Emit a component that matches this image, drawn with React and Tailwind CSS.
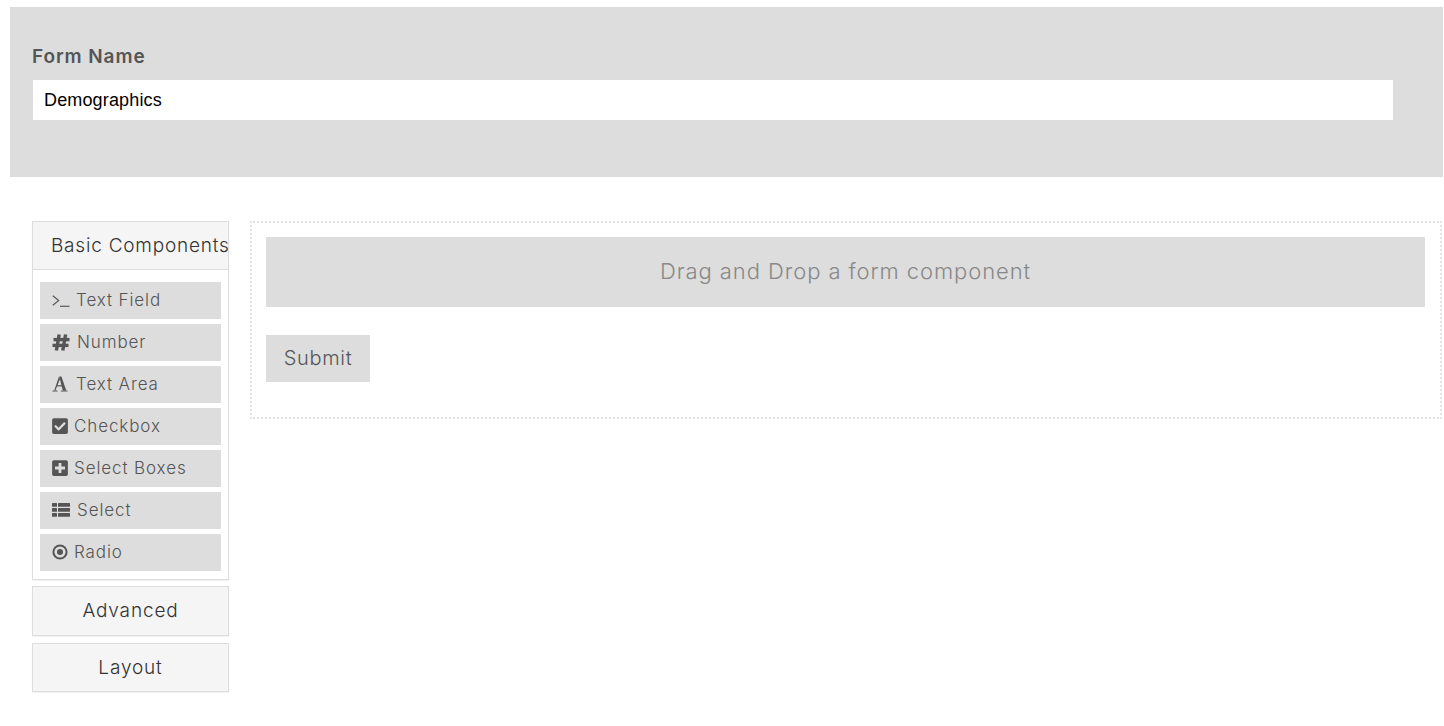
import React from 'react'
import { FaCheckSquare, FaPlusSquare } from 'react-icons/fa'

function TerminalIcon() {
  return (
    <svg width="18" height="12" viewBox="0 0 18 12" fill="none" stroke="#555" strokeWidth="1.15">
      <path d="M0.8 0.8 L6.7 5.5 L0.8 10.2" />
      <path d="M8 11.3 H17.5" />
    </svg>
  )
}

function HashIcon() {
  return (
    <svg width="18" height="17" viewBox="0 0 18 17" fill="none" stroke="#555" strokeWidth="3.4">
      <path d="M7.2 0.5 L4.4 16.5" />
      <path d="M13.6 0.5 L10.8 16.5" />
      <path d="M1.5 5.6 H17.5" />
      <path d="M0.5 11.4 H16.5" />
    </svg>
  )
}

function FontIcon() {
  return (
    <svg width="16" height="16" viewBox="0 0 16 16" fill="#555">
      <polygon points="7.2,0.5 9.4,0.5 14.3,14.6 10.8,14.6" />
      <polygon points="7,0.5 8,3 3.4,14.6 2.2,14.6" />
      <rect x="4.5" y="9.2" width="6.1" height="1.2" />
      <rect x="0.5" y="14.5" width="5" height="1" />
      <rect x="9" y="14.5" width="6.5" height="1" />
    </svg>
  )
}

function ListIcon() {
  return (
    <svg width="18" height="14" viewBox="0 0 18 14" fill="#555">
      <rect x="0" y="0" width="5" height="3.8" rx="0.6" />
      <rect x="6" y="0" width="12" height="3.8" rx="0.6" />
      <rect x="0" y="5" width="5" height="3.8" rx="0.6" />
      <rect x="6" y="5" width="12" height="3.8" rx="0.6" />
      <rect x="0" y="10" width="5" height="3.8" rx="0.6" />
      <rect x="6" y="10" width="12" height="3.8" rx="0.6" />
    </svg>
  )
}

function RadioIcon() {
  return (
    <svg width="16" height="16" viewBox="0 0 16 16">
      <circle cx="8" cy="8" r="6.6" fill="none" stroke="#555" strokeWidth="2" />
      <circle cx="8" cy="8" r="3" fill="#555" />
    </svg>
  )
}

const items = [
  { label: 'Text Field', icon: <TerminalIcon />, box: 'w-[18px]', gap: 'gap-[6px]' },
  { label: 'Number', icon: <HashIcon />, box: 'w-[18px]', gap: 'gap-[7px]' },
  { label: 'Text Area', icon: <FontIcon />, box: 'w-[16px] mb-[2px]', gap: 'gap-[8px]' },
  { label: 'Checkbox', icon: <FaCheckSquare size={18} />, box: 'w-[16px] mb-[2px]', gap: 'gap-[6px]' },
  { label: 'Select Boxes', icon: <FaPlusSquare size={18} />, box: 'w-[16px] mb-[2px]', gap: 'gap-[6px]' },
  { label: 'Select', icon: <ListIcon />, box: 'w-[18px] mb-[2px]', gap: 'gap-[7px]' },
  { label: 'Radio', icon: <RadioIcon />, box: 'w-[16px] mb-[1px]', gap: 'gap-[6px]' },
]

function SideItem({ label, icon, box, gap }) {
  return (
    <div className={`h-[37px] pl-3 flex items-center ${gap} bg-[#ddd] text-[#555] text-[17px] font-light tracking-[0.9px]`}>
      <span className={`flex items-center justify-center ${box}`}>{icon}</span>
      <span>{label}</span>
    </div>
  )
}

function CollapsedPanel({ title, className }) {
  return (
    <div className={`w-[197px] flex items-center justify-center bg-[#f5f5f5] border border-[#ddd] shadow-[0_1px_1px_rgba(0,0,0,0.05)] text-[#333] text-[19px] font-light tracking-[0.85px] ${className}`}>
      {title}
    </div>
  )
}

export default function App() {
  return (
    <div className="w-[1444px] h-[726px] overflow-hidden bg-white pt-[7px] font-['Inter',sans-serif]">
      <div className="ml-[10px] w-[1433px] h-[170px] bg-[#ddd] pl-[22px] pt-[37px]">
        <label className="block h-[35px] text-[19px] leading-[26px] font-semibold tracking-[0.9px] text-[#555]">Form Name</label>
        <div className="w-[1362px] h-[42px] bg-white border border-[#ddd] pl-[11px] flex items-center font-['Liberation_Sans',sans-serif] text-[18px] tracking-[0.15px] text-black">
          Demographics
        </div>
      </div>

      <div className="mt-[44px] ml-[32px] flex items-start gap-[21px]">
        <div className="w-[197px] flex flex-col">
          <div className="h-[359px] border border-[#ddd] bg-white shadow-[0_1px_1px_rgba(0,0,0,0.05)]">
            <div className="h-[48px] pt-[2px] bg-[#f5f5f5] border-b border-[#ddd] pl-[18px] flex items-center whitespace-nowrap overflow-hidden text-[#333] text-[19px] font-light tracking-[0.78px]">
              Basic Components
            </div>
            <div className="pt-3 px-[7px] flex flex-col gap-[5px]">
              {items.map((item) => (
                <SideItem key={item.label} {...item} />
              ))}
            </div>
          </div>
          <CollapsedPanel title="Advanced" className="mt-[6px] h-[50px]" />
          <CollapsedPanel title="Layout" className="mt-[7px] h-[49px] pt-[2px]" />
        </div>

        <div className="w-[1192px] h-[198px] border-2 border-dotted border-[#e4e4e4] pt-[14px] pl-[14px]">
          <div className="w-[1159px] h-[70px] pb-[2px] bg-[#ddd] flex items-center justify-center text-[#888] text-[22px] font-light tracking-[0.92px]">
            Drag and Drop a form component
          </div>
          <button className="mt-[28px] pb-[1px] w-[104px] h-[47px] bg-[#ddd] text-[#555] text-[20px] font-light tracking-[0.7px]">Submit</button>
        </div>
      </div>
    </div>
  )
}
